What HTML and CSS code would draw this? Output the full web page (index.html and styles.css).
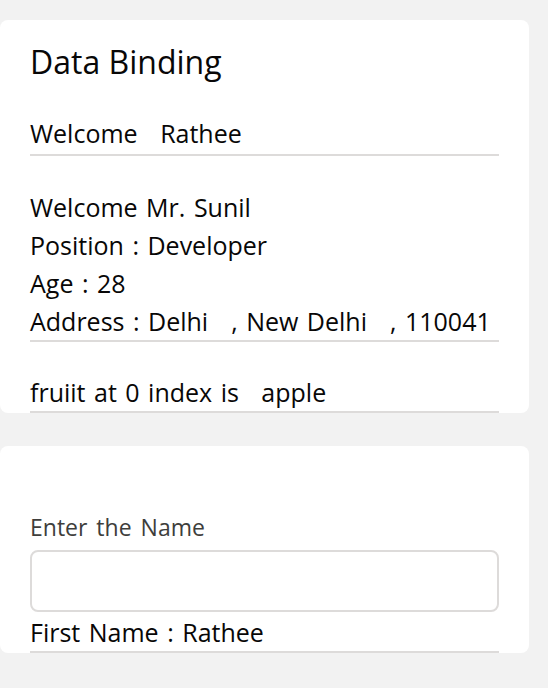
FILE: index.html
```html
<!DOCTYPE html>
<html lang="en">

<head>
  <meta charset="UTF-8">
  <meta name="viewport" content="width=device-width, initial-scale=1.0">
  <title>Data Binding</title>
  <link rel="stylesheet" href="styles.css">
</head>

<body>
  <div class="card">
    <h2 class="card-title">Data Binding</h2>

    <p class="row greet">Welcome <span class="val">Rathee</span></p>

    <div class="row details">
      <p>Welcome Mr. Sunil</p>
      <p>Position : Developer</p>
      <p>Age : 28</p>
      <p class="address">Address : Delhi<span class="gap"></span>, New Delhi<span class="gap"></span>, 110041</p>
    </div>

    <p class="row fruit">fruiit at 0 index is <span class="val">apple</span></p>
  </div>

  <div class="card card-form">
    <label for="nameInput" class="label">Enter the Name</label>
    <input type="text" id="nameInput" class="input">
    <p class="row first">First Name : Rathee</p>
  </div>
</body>

</html>
```
FILE: styles.css
```css
body {
  margin: 0;
  background: #f2f2f2;
  font-family: "Open Sans", "Noto Sans", sans-serif;
  color: #080707;
}

p {
  margin: 0;
}

.card {
  width: 469px;
  margin-top: 20px;
  padding: 22px 30px 0;
  background: #fff;
  border-radius: 8px;
}

.card-title {
  margin: 0 0 32px;
  font-size: 32px;
  font-weight: 400;
  line-height: 40px;
}

.row {
  font-size: 25px;
  line-height: 38px;
  word-spacing: 2px;
  border-bottom: 2px solid #dddbda;
}

.greet {
  padding-bottom: 2px;
}

.details {
  margin-top: 32px;
}

.address {
  white-space: nowrap;
}

.fruit {
  margin-top: 31px;
}

.val {
  margin-left: 14px;
}

.gap {
  display: inline-block;
  width: 23px;
}

.card-form {
  margin-top: 33px;
  padding-top: 66px;
}

.label {
  display: block;
  font-size: 23px;
  line-height: 30px;
  word-spacing: 3px;
  color: #3e3e3c;
  margin-bottom: 8px;
}

.input {
  display: block;
  box-sizing: border-box;
  width: 100%;
  height: 62px;
  margin: 0;
  border: 2px solid #dddbda;
  border-radius: 8px;
  background: #fff;
  font: inherit;
}

.first {
  padding-top: 1px;
}
```
